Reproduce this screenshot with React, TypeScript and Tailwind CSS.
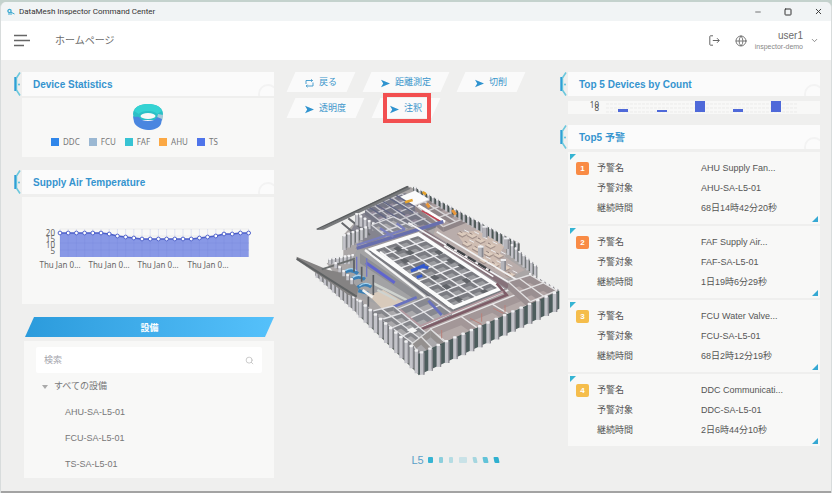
import type { ReactNode } from "react"
import { ChevronDown, Globe, Minus, Search, Square, X } from "lucide-react"

type Point = [number, number]
type Quad = [Point, Point, Point, Point]

interface Alert {
  name: string
  target: string
  duration: string
  badge: string
}

const alerts: Alert[] = [
  { name: "AHU Supply Fan...", target: "AHU-SA-L5-01", duration: "68日14時42分20秒", badge: "bg-[#f98b45]" },
  { name: "FAF Supply Air...", target: "FAF-SA-L5-01", duration: "1日19時6分29秒", badge: "bg-[#f98b45]" },
  { name: "FCU Water Valve...", target: "FCU-SA-L5-01", duration: "68日2時12分19秒", badge: "bg-[#f5bd4b]" },
  { name: "DDC Communicati...", target: "DDC-SA-L5-01", duration: "2日6時44分10秒", badge: "bg-[#f5bd4b]" },
]

const legend = [
  { label: "DDC", color: "bg-[#2f86ea]" },
  { label: "FCU", color: "bg-[#9bb8d3]" },
  { label: "FAF", color: "bg-[#37c3d3]" },
  { label: "AHU", color: "bg-[#fba844]" },
  { label: "TS", color: "bg-[#4f74ea]" },
]

const devices = ["AHU-SA-L5-01", "FCU-SA-L5-01", "TS-SA-L5-01"]

const tools = [
  { label: "戻る", back: true },
  { label: "距離測定" },
  { label: "切削" },
  { label: "透明度" },
  { label: "注釈", highlighted: true },
]

const temperatures = [36, 36, 36, 36, 36, 36, 37, 39, 40, 41, 42, 42, 42, 42, 42, 42, 42, 41, 40, 39, 37, 37, 36, 36]

const deviceBars = [
  { x: 50, h: 3 },
  { x: 89, h: 2 },
  { x: 127, h: 11 },
  { x: 165, h: 3 },
  { x: 203, h: 11 },
]

const pagerDots = [
  "w-[5px] bg-[#35b4d3]",
  "w-1 bg-[#8ccfdd]",
  "w-1 bg-[#b5dce3]",
  "w-2 bg-[#c9e2e7]",
  "w-1 skew-x-12 bg-[#a5d6df]",
  "w-[5px] skew-x-12 bg-[#62c3d8]",
  "w-[5px] skew-x-12 bg-[#2fb0cf]",
]

function PanelTitle({ children }: { children: ReactNode }) {
  return (
    <div className="flex h-6 items-stretch">
      <svg viewBox="0 0 8 24" className="h-6 w-2 shrink-0" fill="none">
        <path d="M6 0.5 2.4 6v12L6 23.5" stroke="#6cc8dd" strokeWidth="1.6" />
        <path d="M1.2 5v14" stroke="#2f9fd6" strokeWidth="1.8" />
        <circle cx="5" cy="12.5" r="1" fill="#58bfdc" />
      </svg>
      <h2 className="relative flex flex-1 items-center overflow-hidden bg-[#fbfbfb] pl-[11px] text-[10px] font-bold text-[#3594cf]">
        {children}
        <span className="absolute -right-1 -bottom-2 size-5 rounded-full border-2 border-[#f3f3f3]" />
      </h2>
    </div>
  )
}

function Donut() {
  return (
    <svg viewBox="0 0 30 26" className="h-[26px] w-[30px]">
      <path d="M0 10C0 4 6 0 15 0s15 4 15 10l-1 6H1z" fill="#2cc0c6" />
      <path d="M1 7c2-5 7-7 14-7s12 2 14 7l-5 3c-1-2-5-3-9-3s-8 1-9 3z" fill="#35d3d3" />
      <path d="m25 10 5 1-1 6-5-3z" fill="#a9c9d8" />
      <path d="M0 12c2 2 4 0 6 1 2 3 5 4 9 4s7-1 9-4l5 2-1 5c-2 4-7 6-13 6S2 22 1 18z" fill="#4a86e0" />
      <ellipse cx="15" cy="12" rx="7.5" ry="3" fill="#f8f8f7" />
    </svg>
  )
}

function TemperatureChart() {
  const points = temperatures.map((y, i) => `${38 + i * 8.2},${y}`)
  return (
    <svg viewBox="0 0 252 107" className="w-full" fontFamily="Noto Sans, sans-serif" fontSize="8" fill="#666">
      {[0, 1, 2, 3].map((i) => (
        <path key={i} d={`M38 ${32 + i * 7}H227`} stroke="#e4e4e4" strokeWidth="0.6" />
      ))}
      <polygon points={`38,60 ${points.join(" ")} 226.6,60`} fill="#8898e6" />
      {temperatures.map((_, i) => (
        <path key={i} d={`M${38 + i * 8.2} 32V60`} stroke="#6f7fd6" strokeOpacity="0.25" strokeWidth="0.7" />
      ))}
      <path d="M38 46H227M38 53H227" stroke="#6f7fd6" strokeOpacity="0.3" strokeWidth="0.7" />
      <polyline points={points.join(" ")} fill="none" stroke="#4c5fc9" strokeWidth="1.5" />
      {temperatures.map((y, i) => (
        <circle key={i} cx={38 + i * 8.2} cy={y} r="1.9" fill="#fff" stroke="#5063cc" strokeWidth="1" />
      ))}
      {["20", "15", "10", "5"].map((label, i) => (
        <text key={label} x="33" y={39 + i * 6} textAnchor="end">{label}</text>
      ))}
      {[38, 87, 136, 186].map((x) => (
        <text key={x} x={x} y="71" textAnchor="middle">Thu Jan 0...</text>
      ))}
    </svg>
  )
}

function DeviceChart() {
  return (
    <svg viewBox="0 0 252 13" className="w-full overflow-visible bg-[#f8f8f7]" fontFamily="Noto Sans, sans-serif" fontSize="8" fill="#555">
      <path d="M38 3H230M38 7H230M38 11H230" stroke="#e3e3e3" strokeWidth="0.6" strokeDasharray="3 1" />
      {deviceBars.map((bar) => (
        <rect key={bar.x} x={bar.x} y={11 - bar.h} width="10" height={bar.h} fill="#4f69d9" />
      ))}
      <text x="31" y="7" textAnchor="end">10</text>
      <text x="31" y="10" textAnchor="end">8</text>
    </svg>
  )
}

const mix = (a: Point, b: Point, t: number): Point => [a[0] + (b[0] - a[0]) * t, a[1] + (b[1] - a[1]) * t]

// Partition walls of a floor area: side faces first, bright top edges over them
function Rooms({ quad, cols, rows, depth = 10, top = "#e6e6e9", face = "#96969b", floor = "#aaa9ac", width = 4 }: {
  quad: Quad
  cols: number
  rows: number
  depth?: number
  top?: string
  face?: string
  floor?: string
  width?: number
}) {
  const [a, b, c, d] = quad
  const lines: [Point, Point][] = []
  for (let i = 0; i <= cols; i++) lines.push([mix(a, b, i / cols), mix(d, c, i / cols)])
  for (let i = 0; i <= rows; i++) lines.push([mix(a, d, i / rows), mix(b, c, i / rows)])
  return (
    <g>
      <polygon points={quad.join(" ")} fill={floor} />
      {lines.map(([p, q], i) => (
        <polygon key={i} points={`${p} ${q} ${q[0]},${q[1] + depth} ${p[0]},${p[1] + depth}`} fill={face} />
      ))}
      {lines.map(([p, q], i) => (
        <path key={i} d={`M${p}L${q}`} stroke={top} strokeWidth={width} />
      ))}
    </g>
  )
}

// Facade strip with vertical fins between two top corners
function Facade({ from, to, count, h1, h2, width = 9, wall = "#65706f" }: {
  from: Point
  to: Point
  count: number
  h1: number
  h2: number
  width?: number
  wall?: string
}) {
  const fins = Array.from({ length: count }, (_, i) => {
    const t = (i + 0.4) / count
    const [x, y] = mix(from, to, t)
    return { x, y, h: h1 + (h2 - h1) * t }
  })
  return (
    <g>
      <polygon points={`${from} ${to} ${to[0]},${to[1] + h2 - 6} ${from[0]},${from[1] + h1 - 6}`} fill={wall} />
      {fins.map(({ x, y, h }) => (
        <g key={x}>
          <rect x={x + width / 2 - 1} y={y} width={width / 2} height={h - 3} fill="#85858c" />
          <rect x={x - width / 2} y={y - 3} width={width} height={h} fill="#c3c3c9" />
          <rect x={x - width / 2} y={y - 4} width={width} height="7" rx="2" fill="#f1f1f3" />
        </g>
      ))}
    </g>
  )
}

function BuildingModel() {
  return (
    <svg viewBox="-48 0 858 615" className="w-full" fill="none">
      <polygon points="360,20 690,190 690,225 742,260 738,290 805,330 385,540 200,370 110,250 160,235 160,165 215,105" fill="#aaa6a6" />

      {/* north-west wing and its roof beams */}
      <polygon points="210,105 345,38 470,120 240,195 175,165" fill="#85848f" />
      <Rooms quad={[[225, 88], [335, 42], [455, 120], [330, 170]]} cols={4} rows={5} depth={16} top="#c8c8cf" face="#767785" floor="#92899a" />
      <path d="M235 80 300 122M255 72 320 112M275 62 345 105M295 53 370 98M315 44 395 92" stroke="#626784" strokeWidth="4" />
      <polygon points="80,150 350,18 362,26 100,149" fill="#77797b" />
      <path d="M80 148 355 19" stroke="#595c5e" strokeWidth="4" />
      <path d="M155 128 205 170M175 115 240 165" stroke="#66686c" strokeWidth="6" />
      <Facade from={[195, 100]} to={[270, 142]} count={6} h1={38} h2={18} width={8} wall="#777981" />
      <Facade from={[158, 168]} to={[235, 140]} count={6} h1={48} h2={32} width={8} wall="#555d5b" />
      <Facade from={[115, 238]} to={[195, 225]} count={7} h1={18} h2={30} width={8} wall="#59605d" />
      <Rooms quad={[[245, 135], [310, 110], [385, 150], [300, 180]]} cols={3} rows={2} depth={12} top="#d9d9de" face="#85868f" />

      {/* open office on the east side */}
      <polygon points="440,135 530,125 655,190 645,230 705,270 640,300 430,165" fill="#b9adab" />
      <polygon points="500,160 570,150 645,195 620,235 665,265 640,280 540,220" fill="#cfbdb2" />
      {[[515, 160], [545, 165], [570, 180], [600, 195], [530, 190], [560, 205], [595, 220], [625, 225], [580, 240], [612, 252], [645, 262], [660, 282]].map(([x, y]) => (
        <g key={`${x}-${y}`}>
          <path d={`M${x - 14} ${y}l14-6 16 8-14 7z`} fill="#dccbbd" />
          <path d={`M${x - 14} ${y}l16 9 14-7v4l-14 7-16-9z`} fill="#a4938d" />
          <path d={`M${x - 6} ${y - 6}l8 4`} stroke="#8d7d7a" strokeWidth="3" />
          <path d={`M${x + 8} ${y - 10}l14 7`} stroke="#ececee" strokeWidth="3" />
        </g>
      ))}
      <Rooms quad={[[375, 75], [430, 55], [535, 110], [460, 140]]} cols={2} rows={3} depth={16} top="#d8d5d7" face="#8f8588" floor="#ab9fa0" />
      <Facade from={[370, 20]} to={[688, 192]} count={24} h1={18} h2={38} width={6} wall="#4a5654" />
      <Facade from={[650, 182]} to={[742, 262]} count={8} h1={42} h2={36} width={7} wall="#5d6664" />
      <Facade from={[715, 280]} to={[806, 332]} count={7} h1={36} h2={50} width={8} wall="#4a5654" />
      <polygon points="330,50 375,32 418,58 372,76" fill="#fbfbfc" />
      <path d="M345 67 368 60M398 36 408 43" stroke="#e5a22c" strokeWidth="8" />
      <path d="M385 76 465 126" stroke="#fff" strokeWidth="8" />
      <path d="M395 92 458 128" stroke="#c33e4f" strokeWidth="4" />
      <path d="M410 70 418 82M487 90 497 104" stroke="#e89639" strokeWidth="9" />
      {[[572, 200], [640, 240], [650, 175], [585, 140]].map(([x, y]) => (
        <g key={x}>
          <rect x={x - 8} y={y} width="16" height="32" fill="#b4b4ba" />
          <rect x={x + 3} y={y} width="5" height="32" fill="#898990" />
          <rect x={x - 8} y={y - 3} width="16" height="6" fill="#eeeef0" />
        </g>
      ))}

      {/* corridors round the core */}
      <polygon points="195,205 385,135 675,315 485,405" fill="#9b969b" />
      <path d="M200 205 460 125" stroke="#686fae" strokeWidth="10" />
      <path d="M270 145 310 170M200 195 345 148M320 130 345 148" stroke="#7a7fbd" strokeWidth="7" />
      <path d="M400 155 655 320" stroke="#86727a" strokeWidth="14" />
      <path d="M355 128 670 315M440 155 690 305" stroke="#f2f2f3" strokeWidth="5" />
      <path d="M470 192 600 272" stroke="#3f4145" strokeWidth="7" strokeDasharray="28 9" />
      <path d="M462 198 610 290" stroke="#fafafa" strokeWidth="5" />

      {/* plant room */}
      <polygon points="200,210 240,205 425,350 390,360 300,385 200,350 165,280" fill="#a3a3a5" />
      <polygon points="210,220 400,352 385,365 210,250" fill="#8f9095" />
      <path d="M225 210 405 350" stroke="#f4f4f5" strokeWidth="7" />
      <path d="M240 212 420 350" stroke="#676a75" strokeWidth="5" />
      <path d="M228 248 314 308" stroke="#6065ce" strokeWidth="9" />
      <path d="M200 230v55M230 235v55" stroke="#7378c5" strokeWidth="4" />
      <polygon points="235,345 280,330 340,365 280,390" fill="#d8cabb" />
      <path d="M250 310 300 335 350 360M262 330 320 360" stroke="#cfd3cf" strokeWidth="7" />
      <path d="M162 278q20-14 42 3M183 300q22-17 42-2M200 325q22-20 44-4M205 332l30 8" stroke="#397fb5" strokeWidth="10" />
      <path d="M165 272q20-12 34 0M188 292q18-12 32-1M208 318q18-14 34-3" stroke="#a8d4ee" strokeWidth="4" />
      <path d="M218 330l30 22" stroke="#f3f3f1" strokeWidth="8" />
      <path d="M215 260v45M250 285v60M235 350v30M192 240v35" stroke="#595c61" strokeWidth="5" />

      {/* core */}
      <Rooms quad={[[245, 208], [385, 162], [632, 325], [490, 382]]} cols={4} rows={9} depth={14} top="#ececef" face="#7b7c82" floor="#9b9ca0" width={4} />
      {[[310, 205], [345, 215], [330, 240], [432, 215], [468, 240], [502, 256], [420, 290], [455, 318], [515, 300], [570, 333], [490, 355]].map(([x, y]) => (
        <path key={x} d={`M${x} ${y}l14-6 15 10-14 7z`} fill="#606368" />
      ))}
      <path d="M363 273 405 255M380 292 397 287M393 258l22 6" stroke="#3359cf" strokeWidth="9" />
      <path d="M245 208 385 162 632 325 490 382z" stroke="#fcfcfc" strokeWidth="11" />
      <path d="M270 215 480 380" stroke="#fafafa" strokeWidth="6" />
      <path d="M400 348 485 403 655 330" stroke="#ededee" strokeWidth="5" />

      {/* south rooms */}
      <Rooms quad={[[318, 390], [415, 350], [485, 400], [388, 445]]} cols={2} rows={2} depth={22} top="#e5e5e8" face="#888990" />
      <path d="M300 385 380 352M415 362 455 405" stroke="#6871bf" strokeWidth="8" />
      <polygon points="388,445 690,325 725,355 430,500 400,480" fill="#b0a5a5" />
      <Rooms quad={[[420, 447], [700, 335], [748, 358], [476, 492]]} cols={3} rows={1} depth={26} top="#e9e7e8" face="#a39798" floor="#b5aaa9" />
      <Rooms quad={[[655, 305], [720, 285], [800, 332], [722, 365]]} cols={2} rows={2} depth={24} top="#e4e2e3" face="#9a8f91" floor="#b1a4a4" />
      <path d="M322 392 388 450 650 345 620 310" stroke="#7e5d68" strokeWidth="8" />
      <path d="M330 388 390 438 640 335" stroke="#b59aa1" strokeWidth="5" />
      <path d="M540 415l35 18M575 400v25M610 385l30 15M455 450v30M645 375v22" stroke="#bb817a" strokeWidth="3" />
      <Rooms quad={[[240, 395], [310, 378], [412, 462], [372, 492]]} cols={2} rows={4} depth={14} top="#e4e4e7" face="#85868b" />
      <Rooms quad={[[365, 492], [422, 448], [468, 490], [392, 525]]} cols={2} rows={1} depth={24} top="#dededf" face="#94908f" />
      <path d="M350 450l18-8 14 10-16 8z" fill="#f5f5f5" />

      {/* outer canopy and front facades */}
      <Facade from={[75, 272]} to={[210, 365]} count={11} h1={20} h2={48} width={7} wall="#77797a" />
      <polygon points="20,230 115,270 165,280 205,325 200,352 175,345 20,240" fill="#858383" />
      <path d="M20 236 200 350" stroke="#5f6263" strokeWidth="6" />
      <path d="M95 268 195 236" stroke="#6b6e6e" strokeWidth="6" />
      <Facade from={[132, 245]} to={[192, 305]} count={5} h1={18} h2={18} width={8} wall="#858383" />
      <Facade from={[204, 358]} to={[388, 520]} count={12} h1={52} h2={72} width={10} wall="#616866" />
      <Facade from={[385, 522]} to={[808, 332]} count={17} h1={70} h2={60} width={10} wall="#4d5d5d" />
    </svg>
  )
}

function AlertCard({ alert, rank }: { alert: Alert; rank: number }) {
  return (
    <li className="relative flex gap-2 bg-[#f8f8f7] py-1.5 pl-2">
      <span className="absolute top-0.5 left-0.5 size-1.5 bg-[#35b4d3] [clip-path:polygon(0_0,100%_0,0_100%)]" />
      <span className={`mt-1 flex size-[13px] items-center justify-center rounded-xs text-[8px] font-bold text-white ${alert.badge}`}>
        {rank}
      </span>
      <dl className="grid flex-1 grid-cols-[104px_1fr] text-[9px] leading-5 text-[#555]">
        <dt>予警名</dt>
        <dd>{alert.name}</dd>
        <dt>予警対象</dt>
        <dd>{alert.target}</dd>
        <dt>継続時間</dt>
        <dd>{alert.duration}</dd>
      </dl>
      <span className="absolute right-0.5 bottom-0.5 size-1.5 bg-[#35a8d3] [clip-path:polygon(100%_0,100%_100%,0_100%)]" />
    </li>
  )
}

export default function App() {
  return (
    <div className="flex min-h-screen flex-col bg-[#c4d2cd] pt-0.5 font-['Liberation_Sans','Noto_Sans_CJK_JP',sans-serif]">
      <div className="flex flex-1 flex-col overflow-hidden rounded-t-md border-x border-[#d8dcdc] bg-[#efefee]">
        {/* window bar */}
        <div className="flex h-[19px] items-center bg-[#f1f4f5] pl-1.5 font-[Roboto,sans-serif] text-[8px] text-[#333]">
          <svg viewBox="0 0 8 8" className="mr-1 size-2" fill="none" stroke="#3aa8d0">
            <circle cx="2.5" cy="3" r="1.6" strokeWidth="1.3" />
            <path d="M4 4.2 7.5 6M1 6h4" />
          </svg>
          <span className="flex-1">DataMesh Inspector Command Center</span>
          <div className="flex gap-[22px] pr-2">
            <button aria-label="最小化"><Minus className="size-2" /></button>
            <button aria-label="最大化"><Square className="size-2" strokeWidth={3} /></button>
            <button aria-label="閉じる"><X className="size-[9px]" strokeWidth={2.5} /></button>
          </div>
        </div>

        <header className="flex h-[39px] items-center bg-white pr-3 pl-[13px] text-[#6b6b6b]">
          <button aria-label="メニュー">
            <svg viewBox="0 0 16 13" className="h-[13px] w-4" stroke="#666" strokeWidth="1.6">
              <path d="M0 1.5h13M0 6.5h16M0 11.5h10" />
            </svg>
          </button>
          <h1 className="ml-[25px] flex-1 text-[10px]">ホームページ</h1>
          <button aria-label="ログアウト" className="mr-[15px]">
            <svg viewBox="0 0 11 11" className="size-[11px]" fill="none" stroke="#666">
              <path d="M4 .8H1.5Q.8.8.8 1.5v8q0 .7.7.7H4M3.8 5.5H10M8 3.2l2.3 2.3L8 7.8" />
            </svg>
          </button>
          <button aria-label="言語"><Globe className="size-3" strokeWidth={1.8} /></button>
          <button className="ml-2 flex items-center gap-[7px] text-right">
            <span>
              <span className="block text-[10px] leading-3">user1</span>
              <span className="block text-[7px] leading-[9px] text-[#888]">inspector-demo</span>
            </span>
            <ChevronDown className="size-[9px]" />
          </button>
        </header>

        <main className="flex flex-1 border-b-2 border-[#a3a3a3] pt-3 pr-[11px] pb-3 pl-[13px]">
          <aside className="w-[260px] shrink-0">
            <PanelTitle>Device Statistics</PanelTitle>
            <section className="mt-0.5 ml-2 flex h-[59px] flex-col items-center bg-[#f8f8f7] pt-1.5">
              <Donut />
              <ul className="mt-1.5 flex gap-[9px] self-start pl-[29px] font-['Noto_Sans',sans-serif] text-[8px] leading-3 text-[#777]">
                {legend.map((item) => (
                  <li key={item.label} className="flex items-center gap-1">
                    <span className={`size-2 ${item.color}`} />
                    {item.label}
                  </li>
                ))}
              </ul>
            </section>

            <div className="mt-[13px]">
              <PanelTitle>Supply Air Temperature</PanelTitle>
            </div>
            <section className="mt-[3px] ml-2 bg-[#f8f8f7]">
              <TemperatureChart />
            </section>

            <h2 className="mt-[13px] ml-[11px] flex h-5 items-center justify-center bg-linear-to-r from-[#2b9bdc] to-[#55c1fb] pt-1 text-[9px] font-bold text-white [clip-path:polygon(9px_0,100%_0,calc(100%-9px)_100%,0_100%)]">
              設備
            </h2>
            <section className="mt-1 ml-2.5 bg-[#f8f8f7] px-3 pt-1.5 text-[9px] text-[#777]">
              <label className="flex h-[26px] items-center rounded-xs bg-white px-2">
                <input
                  type="text"
                  aria-label="検索"
                  placeholder="検索"
                  className="min-w-0 flex-1 pt-0.5 outline-none placeholder:text-[#a5a5ad]"
                />
                <Search className="size-[9px] text-[#bbb]" />
              </label>
              <button className="flex h-[26px] items-center gap-1.5 pt-0.5 pl-1.5">
                <span className="h-1 w-1.5 bg-[#aaa] [clip-path:polygon(0_0,100%_0,50%_100%)]" />
                すべての設備
              </button>
              <ul className="pb-px pl-[29px] leading-[26px]">
                {devices.map((device) => (
                  <li key={device}>{device}</li>
                ))}
              </ul>
            </section>
          </aside>

          <section className="flex min-w-0 flex-1 flex-col">
            <div className="flex flex-wrap gap-x-4 gap-y-1.5 pl-[17px]">
              {tools.map((tool) => (
                <button
                  key={tool.label}
                  className="relative isolate flex h-5 items-center gap-[5px] px-3.5 pt-0.5 text-[9px] text-[#3a96cb] before:absolute before:inset-0 before:-z-10 before:-skew-x-[24deg] before:bg-[#fafafa]"
                >
                  {tool.back ? (
                    <svg viewBox="0 0 9 9" className="size-[9px]" fill="none" stroke="currentColor" strokeWidth="0.9">
                      <path d="M1 5V1.5h6.5M6.2.3 7.5 1.5 6.2 2.8M8 3.5V7H1.2M2.5 8.3 1.2 7l1.3-1.3" />
                    </svg>
                  ) : (
                    <svg viewBox="0 0 9 9" className="size-[9px]" fill="#2f93cf">
                      <path d="M0 .8 9 4.5 0 8.2l2.2-3.7z" />
                    </svg>
                  )}
                  {tool.label}
                  {tool.highlighted && (
                    <span className="absolute -inset-y-[5px] right-[5px] left-[7px] border-4 border-[#f24f50]" />
                  )}
                </button>
              ))}
            </div>
            <div className="mt-[62px]">
              <BuildingModel />
            </div>
            <div className="mt-[67px] flex items-center justify-center gap-1 pl-[76px] text-[11px] leading-4 text-[#5a9fc8]">
              L5
              <div className="flex gap-1.5">
                {pagerDots.map((dot) => (
                  <button key={dot} aria-label="フロア" className={`h-1.5 rounded-[1px] ${dot}`} />
                ))}
              </div>
            </div>
          </section>

          <aside className="w-[260px] shrink-0">
            <PanelTitle>Top 5 Devices by Count</PanelTitle>
            <section className="mt-[5px] ml-2">
              <DeviceChart />
            </section>
            <div className="mt-[11px]">
              <PanelTitle>Top5 予警</PanelTitle>
            </div>
            <ol className="mt-[3px] ml-2 flex flex-col gap-0.5">
              {alerts.map((alert, i) => (
                <AlertCard key={alert.target} alert={alert} rank={i + 1} />
              ))}
            </ol>
          </aside>
        </main>
      </div>
    </div>
  )
}
